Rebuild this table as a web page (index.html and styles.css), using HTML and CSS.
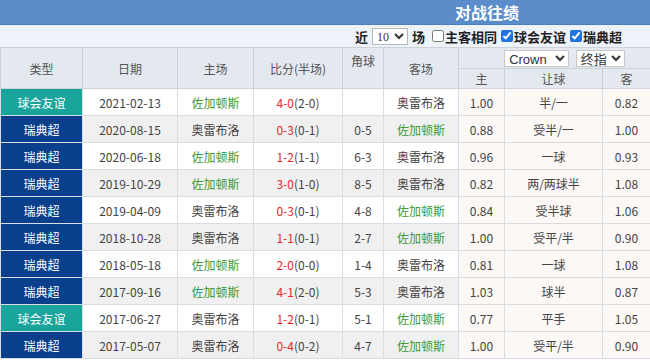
FILE: index.html
```html
<!DOCTYPE html>
<html lang="zh">
<head>
<meta charset="utf-8">
<link rel="stylesheet" href="styles.css">
</head>
<body>
<div class="panel">
  <div class="title-bar"><span class="title">对战往绩</span></div>
  <div class="filter-bar">
    <span class="lbl">近</span>
    <select class="sel-num"><option>10</option></select>
    <span class="lbl">场</span>
    <label class="chk"><input type="checkbox">主客相同</label>
    <label class="chk"><input type="checkbox" checked>球会友谊</label>
    <label class="chk"><input type="checkbox" checked>瑞典超</label>
  </div>
  <table class="tbl">
    <colgroup>
      <col class="c1"><col class="c2"><col class="c3"><col class="c4"><col class="c5"><col class="c6"><col class="c7"><col class="c8"><col class="c9">
    </colgroup>
    <thead>
      <tr class="h1">
        <th rowspan="2">类型</th>
        <th rowspan="2">日期</th>
        <th rowspan="2">主场</th>
        <th rowspan="2">比分(半场)</th>
        <th rowspan="2" class="top">角球</th>
        <th rowspan="2">客场</th>
        <th colspan="3" class="sels">
          <select class="sel-co"><option>Crown</option></select>
          <select class="sel-ty"><option>终指</option></select>
        </th>
      </tr>
      <tr class="h2">
        <th>主</th><th>让球</th><th>客</th>
      </tr>
    </thead>
    <tbody>
      <tr><td class="t-fr">球会友谊</td><td>2021-02-13</td><td class="g">佐加顿斯</td><td><span class="r">4-0</span>(2-0)</td><td></td><td>奥雷布洛</td><td class="o">1.00</td><td class="o">半/一</td><td class="o">0.82</td></tr>
      <tr class="alt"><td class="t-lg">瑞典超</td><td>2020-08-15</td><td>奥雷布洛</td><td><span class="r">0-3</span>(0-1)</td><td>0-5</td><td class="g">佐加顿斯</td><td class="o">0.88</td><td class="o">受半/一</td><td class="o">1.00</td></tr>
      <tr><td class="t-lg">瑞典超</td><td>2020-06-18</td><td class="g">佐加顿斯</td><td><span class="r">1-2</span>(1-1)</td><td>6-3</td><td>奥雷布洛</td><td class="o">0.96</td><td class="o">一球</td><td class="o">0.93</td></tr>
      <tr class="alt"><td class="t-lg">瑞典超</td><td>2019-10-29</td><td class="g">佐加顿斯</td><td><span class="r">3-0</span>(1-0)</td><td>8-5</td><td>奥雷布洛</td><td class="o">0.82</td><td class="o">两/两球半</td><td class="o">1.08</td></tr>
      <tr><td class="t-lg">瑞典超</td><td>2019-04-09</td><td>奥雷布洛</td><td><span class="r">0-3</span>(0-1)</td><td>4-8</td><td class="g">佐加顿斯</td><td class="o">0.84</td><td class="o">受半球</td><td class="o">1.06</td></tr>
      <tr class="alt"><td class="t-lg">瑞典超</td><td>2018-10-28</td><td>奥雷布洛</td><td><span class="r">1-1</span>(0-1)</td><td>2-7</td><td class="g">佐加顿斯</td><td class="o">1.00</td><td class="o">受平/半</td><td class="o">0.90</td></tr>
      <tr><td class="t-lg">瑞典超</td><td>2018-05-18</td><td class="g">佐加顿斯</td><td><span class="r">2-0</span>(0-0)</td><td>1-4</td><td>奥雷布洛</td><td class="o">0.81</td><td class="o">一球</td><td class="o">1.08</td></tr>
      <tr class="alt"><td class="t-lg">瑞典超</td><td>2017-09-16</td><td class="g">佐加顿斯</td><td><span class="r">4-1</span>(2-0)</td><td>5-3</td><td>奥雷布洛</td><td class="o">1.03</td><td class="o">球半</td><td class="o">0.87</td></tr>
      <tr><td class="t-fr">球会友谊</td><td>2017-06-27</td><td>奥雷布洛</td><td><span class="r">1-2</span>(0-1)</td><td>5-1</td><td class="g">佐加顿斯</td><td class="o">0.77</td><td class="o">平手</td><td class="o">1.05</td></tr>
      <tr class="alt"><td class="t-lg">瑞典超</td><td>2017-05-07</td><td>奥雷布洛</td><td><span class="r">0-4</span>(0-2)</td><td>4-7</td><td class="g">佐加顿斯</td><td class="o">1.00</td><td class="o">受平/半</td><td class="o">0.90</td></tr>
    </tbody>
  </table>
</div>
</body>
</html>
```
FILE: styles.css
```css
html, body {
  margin: 0;
  padding: 0;
  background: #ffffff;
}
body {
  font-family: "Noto Sans CJK SC", "Noto Sans", sans-serif;
  font-size: 12px;
  color: #333333;
}
.panel {
  width: 650px;
}
.title-bar {
  height: 25px;
  background: #5b8dca;
  border-bottom: 1px solid #4d7fbe;
  box-sizing: border-box;
  display: flex;
  align-items: center;
  justify-content: flex-end;
  padding-right: 131px;
}
.title {
  color: #ffffff;
  font-weight: bold;
  font-size: 16px;
  line-height: 20px;
}
.filter-bar {
  height: 22px;
  background: #eef3fa;
  display: flex;
  align-items: center;
  justify-content: flex-end;
  padding-right: 28px;
  font-weight: bold;
  font-size: 13px;
  color: #222222;
  box-sizing: border-box;
}
.lbl {
  margin: 0 3px;
}
.sel-num {
  height: 17px;
  width: 36px;
  font-family: "Liberation Serif", serif;
  font-size: 12px;
  padding: 0;
  margin: 0 1px;
  background: #ffffff;
  border: 1px solid #b8b8b8;
  color: #333333;
}
.chk {
  display: flex;
  align-items: center;
}
.chk input {
  width: 12px;
  height: 12px;
  margin: 0 1px 0 4px;
  accent-color: #1f74e0;
}
.tbl {
  width: 650px;
  table-layout: fixed;
  border-collapse: collapse;
}
.c1 { width: 82px; }
.c2 { width: 95px; }
.c3 { width: 76px; }
.c4 { width: 89px; }
.c5 { width: 41px; }
.c6 { width: 75px; }
.c7 { width: 46px; }
.c8 { width: 98px; }
.c9 { width: 48px; }
.tbl th {
  background: #e4e8ef;
  color: #555555;
  font-weight: normal;
  font-size: 12px;
  border: 1px solid #cdd2da;
  padding: 0;
}
.tbl th.top {
  vertical-align: top;
  padding-top: 4px;
}
.h1 { height: 21px; }
.h2 { height: 20px; }
.tbl th.sels {
  text-align: center;
  padding-left: 20px;
}
.sel-co, .sel-ty {
  height: 17px;
  font-family: "Liberation Sans", "Noto Sans CJK SC", sans-serif;
  font-size: 13px;
  padding: 0;
  margin: 0 2px;
  background: #ffffff;
  border: 1px solid #c8c8c8;
  color: #333333;
}
.sel-co { width: 65px; }
.sel-ty { width: 49px; }
.tbl td {
  height: 26px;
  text-align: center;
  padding: 0;
  border: 1px solid #d8dce3;
  color: #444444;
  background: #ffffff;
}
.tbl tr.alt td {
  background: #f0f0f0;
}
.tbl td.o,
.tbl tr.alt td.o {
  background: #fcf8f5;
}
.tbl td.t-fr,
.tbl tr.alt td.t-fr {
  background: #19a59c;
  color: #ffffff;
}
.tbl td.t-lg,
.tbl tr.alt td.t-lg {
  background: #0a3f8c;
  color: #ffffff;
}
.g { color: #3d9a34 !important; }
.r { color: #e52b2b; }
```
